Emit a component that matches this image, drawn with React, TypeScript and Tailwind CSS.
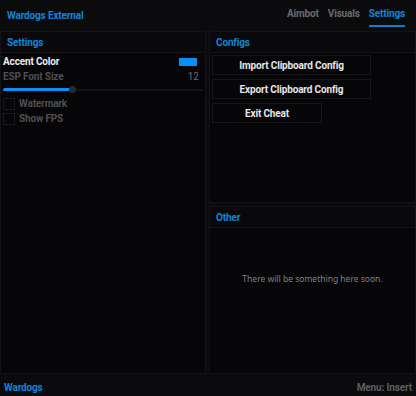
import React from "react";

const font = { fontFamily: 'Roboto, "Noto Sans", sans-serif' };

const t = "text-[10px] font-bold tracking-[-0.15px]";

function Panel({ title, children, className = "" }: { title: string; children?: React.ReactNode; className?: string }) {
  return (
    <div className={"flex flex-col border border-[#131317] bg-[#060608] " + className}>
      <div className={"h-[21px] flex items-center px-[6px] border-b border-[#131317] bg-[#09090b] text-[#0e86dc] " + t}>
        {title}
      </div>
      {children}
    </div>
  );
}

function Btn({ label, w }: { label: string; w: string }) {
  return (
    <div className={"h-[20px] flex items-center justify-center border border-[#16161a] bg-[#060608] text-[#e6e6e6] " + t + " " + w}>
      {label}
    </div>
  );
}

export default function App() {
  return (
    <div style={font} className="w-[416px] h-[396px] bg-[#0b0b0d] flex flex-col overflow-hidden">
      <div className="h-[31px] flex items-center justify-between pl-[7px] pr-[11px]">
        <div className={t + " text-[#0e86dc]"}>Wardogs External</div>
        <div className={"flex items-stretch h-full gap-[9px] " + t}>
          <div className="flex items-center text-[#6a6a6e] pt-[1px] mb-[4px] border-b-[2px] border-transparent">Aimbot</div>
          <div className="flex items-center text-[#6a6a6e] pt-[1px] mb-[4px] border-b-[2px] border-transparent">Visuals</div>
          <div className="flex items-center text-[#0e86dc] pt-[1px] mb-[4px] border-b-[2px] border-[#0e7fd0]">Settings</div>
        </div>
      </div>
      <div className="flex-1 flex gap-[3px]">
        <Panel title="Settings" className="w-[206px]">
          <div className="flex flex-col px-[2px] pt-[1px]">
            <div className="h-[15px] flex items-center justify-between">
              <span className={t + " text-[#ececec]"}>Accent Color</span>
              <span className="w-[18px] h-[8px] bg-[#0a8ff2] mr-[6px]"></span>
            </div>
            <div className="h-[15px] flex items-center justify-between">
              <span className={t + " text-[#4e4e52]"}>ESP Font Size</span>
              <span className="text-[10px] text-[#6a6a6e] mr-[4px]">12</span>
            </div>
            <div className="relative h-[11px] flex items-center">
              <div className="w-full h-[2px] bg-[#131316]"></div>
              <div className="absolute left-0 w-[68px] h-[3px] bg-[#0a8ff2] rounded-full"></div>
              <div className="absolute left-[66px] w-[7px] h-[7px] rounded-full bg-[#2a2a2e]"></div>
            </div>
            <div className="h-[15px] flex items-center gap-[4px] mt-[1px]">
              <span className="w-[12px] h-[12px] border border-[#1a1a1e] bg-[#060608]"></span>
              <span className={t + " text-[#4e4e52]"}>Watermark</span>
            </div>
            <div className="h-[15px] flex items-center gap-[4px]">
              <span className="w-[12px] h-[12px] border border-[#1a1a1e] bg-[#060608]"></span>
              <span className={t + " text-[#4e4e52]"}>Show FPS</span>
            </div>
          </div>
        </Panel>
        <div className="flex-1 flex flex-col gap-[3px]">
          <Panel title="Configs" className="h-[172px]">
            <div className="flex flex-col gap-[4px] px-[2px] pt-[2px]">
              <Btn label="Import Clipboard Config" w="w-[159px]" />
              <Btn label="Export Clipboard Config" w="w-[159px]" />
              <Btn label="Exit Cheat" w="w-[110px]" />
            </div>
          </Panel>
          <Panel title="Other" className="flex-1">
            <div className="flex justify-center pt-[45px] text-[8.5px] text-[#808084]" style={{ fontFamily: '"Noto Sans", sans-serif' }}>
              There will be something here soon.
            </div>
          </Panel>
        </div>
      </div>
      <div className="h-[22px] flex items-center justify-between px-[4px] pt-[5px]">
        <span className={t + " text-[#0e86dc]"}>Wardogs</span>
        <span className={t + " text-[#5e5e62]"}>Menu: Insert</span>
      </div>
    </div>
  );
}
